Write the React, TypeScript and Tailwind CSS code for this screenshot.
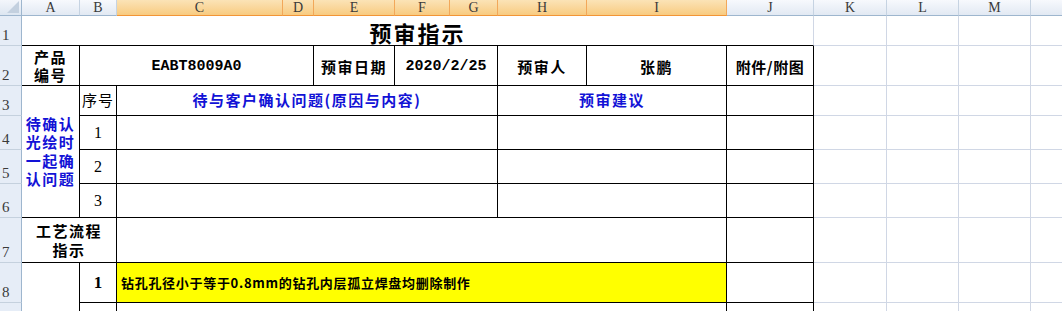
import React from 'react';

const cjk = "font-['Noto_Sans_CJK_SC',sans-serif]";
const mono = "font-['Liberation_Mono','Noto_Sans_CJK_SC',monospace]";

const ColHead = ({ label, selected }: { label: string; selected?: boolean }) => (
  <div
    className={
      selected
        ? "flex items-center justify-center border-r border-b border-r-[#f2a85a] border-b-[#f29536] bg-linear-to-b from-[#fbe3b6] to-[#f8cb80] font-['Liberation_Serif',serif] text-[14px] leading-none text-[#3a3a3a]"
        : "flex items-center justify-center border-r border-b border-r-[#c6d3e2] border-b-[#9eb6ce] bg-linear-to-b from-[#f7f9fd] to-[#e2e9f3] font-['Liberation_Serif',serif] text-[14px] leading-none text-[#3a3a3a]"
    }
  >
    {label}
  </div>
);

const RowHead = ({ n }: { n?: number }) => (
  <div className="flex items-end border-r border-b border-r-[#9eb6ce] border-b-[#c5d1de] bg-[#e6edf7] pb-[2px] pl-[2px] font-['Liberation_Serif',serif] text-[15px] leading-none text-[#3a3a3a]">
    {n}
  </div>
);

// plain empty sheet cell with light gridlines
const Blank = () => <div className="border-r border-b border-[#d0d7e5]" />;

const Box = ({ className = '', children }: { className?: string; children?: React.ReactNode }) => (
  <div className={`flex items-center justify-center border-r border-b border-black ${className}`}>{children}</div>
);

const blue = 'text-[#1212d6]';

export default function App() {
  // N is only a sliver at the right edge, its letter sits off screen
  const letters = ['A', 'B', 'C', 'D', 'E', 'F', 'G', 'H', 'I', 'J', 'K', 'L', 'M', ''];
  const selected = ['C', 'D', 'E', 'F', 'G', 'H', 'I'];

  return (
    <div className="h-[311px] w-[1062px] overflow-hidden bg-white">
      <div className="grid grid-cols-[22px_58px_37px_166px_31px_81px_55px_48px_89px_140px_87px_73px_72px_72px_72px] grid-rows-[16px_30px_40px_30px_34px_34px_34px_45px_40px_24px]">
        {/* column headers */}
        <div className="relative border-r border-b border-r-[#9eb6ce] border-b-[#9eb6ce] bg-linear-to-b from-[#f3f6fb] to-[#dde6f1]">
          <svg className="absolute right-[2px] bottom-[2px]" width="12" height="12" viewBox="0 0 12 12">
            <polygon points="12,0 12,12 0,12" fill="#c3d0df" />
          </svg>
        </div>
        {letters.map((l, i) => (
          <ColHead key={i} label={l} selected={selected.includes(l)} />
        ))}

        {/* row 1 */}
        <RowHead n={1} />
        <div className={`col-span-10 flex items-center justify-center border-r border-b border-r-[#d0d7e5] border-b-black pt-[3px] ${cjk} text-[22px] font-bold leading-none tracking-[2px] text-black`}>
          预审指示
        </div>
        <Blank />
        <Blank />
        <Blank />
        <Blank />

        {/* row 2 */}
        <RowHead n={2} />
        <Box className={`${cjk} text-[15px] font-bold leading-[18px] tracking-[1.5px] text-black`}>
          <span className="text-center">
            产品
            <br />
            编号
          </span>
        </Box>
        <Box className={`col-span-3 pt-[4px] ${mono} text-[15px] font-bold text-black`}>EABT8009A0</Box>
        <Box className={`pt-[4px] ${cjk} text-[15px] font-bold tracking-[1.5px] text-black`}>预审日期</Box>
        <Box className={`col-span-2 pt-[4px] ${mono} text-[15px] font-bold text-black`}>2020/2/25</Box>
        <Box className={`pt-[4px] ${cjk} text-[15px] font-bold tracking-[1.5px] text-black`}>预审人</Box>
        <Box className={`pt-[4px] ${cjk} text-[15px] font-bold tracking-[1.5px] text-black`}>张鹏</Box>
        <Box className={`pt-[4px] ${cjk} text-[15px] font-bold tracking-[0.5px] text-black`}>附件/附图</Box>
        <Blank />
        <Blank />
        <Blank />
        <Blank />

        {/* row 3 */}
        <RowHead n={3} />
        <Box className={`row-span-4 ${cjk} text-[15px] font-bold leading-[18.5px] tracking-[1.5px] ${blue}`}>
          <span className="text-center">
            待确认
            <br />
            光绘时
            <br />
            一起确
            <br />
            认问题
          </span>
        </Box>
        <Box className={`${cjk} text-[15px] tracking-[1px] text-black`}>序号</Box>
        <Box className={`col-span-5 ${cjk} text-[15px] font-bold tracking-[1.5px] ${blue}`}>待与客户确认问题(原因与内容)</Box>
        <Box className={`col-span-2 ${cjk} text-[15px] font-bold tracking-[1.5px] ${blue}`}>预审建议</Box>
        <Box />
        <Blank />
        <Blank />
        <Blank />
        <Blank />

        {/* rows 4-6 */}
        {[1, 2, 3].map((n) => (
          <React.Fragment key={n}>
            <RowHead n={n + 3} />
            <Box className="font-['Liberation_Serif',serif] text-[16px] text-black">{n}</Box>
            <Box className="col-span-5" />
            <Box className="col-span-2" />
            <Box />
            <Blank />
            <Blank />
            <Blank />
            <Blank />
          </React.Fragment>
        ))}

        {/* row 7 */}
        <RowHead n={7} />
        <Box className={`col-span-2 ${cjk} text-[15px] font-bold leading-[19px] tracking-[1.5px] text-black`}>
          <span className="text-center">
            工艺流程
            <br />
            指示
          </span>
        </Box>
        <Box className="col-span-7" />
        <Box />
        <Blank />
        <Blank />
        <Blank />
        <Blank />

        {/* row 8 */}
        <RowHead n={8} />
        <div className="row-span-2 border-r border-black" />
        <Box className="font-['Liberation_Serif',serif] text-[17px] font-bold text-black">1</Box>
        <div className={`col-span-7 flex items-center border-r border-b border-black bg-[#ffff00] pl-[4px] ${cjk} text-[13px] font-bold tracking-[0.7px] text-black`}>
          钻孔孔径小于等于0.8mm的钻孔内层孤立焊盘均删除制作
        </div>
        <Box />
        <Blank />
        <Blank />
        <Blank />
        <Blank />

        {/* row 9, only its top edge is on screen */}
        <RowHead />
        <Box />
        <Box className="col-span-7" />
        <Box />
        <Blank />
        <Blank />
        <Blank />
        <Blank />
      </div>
    </div>
  );
}
